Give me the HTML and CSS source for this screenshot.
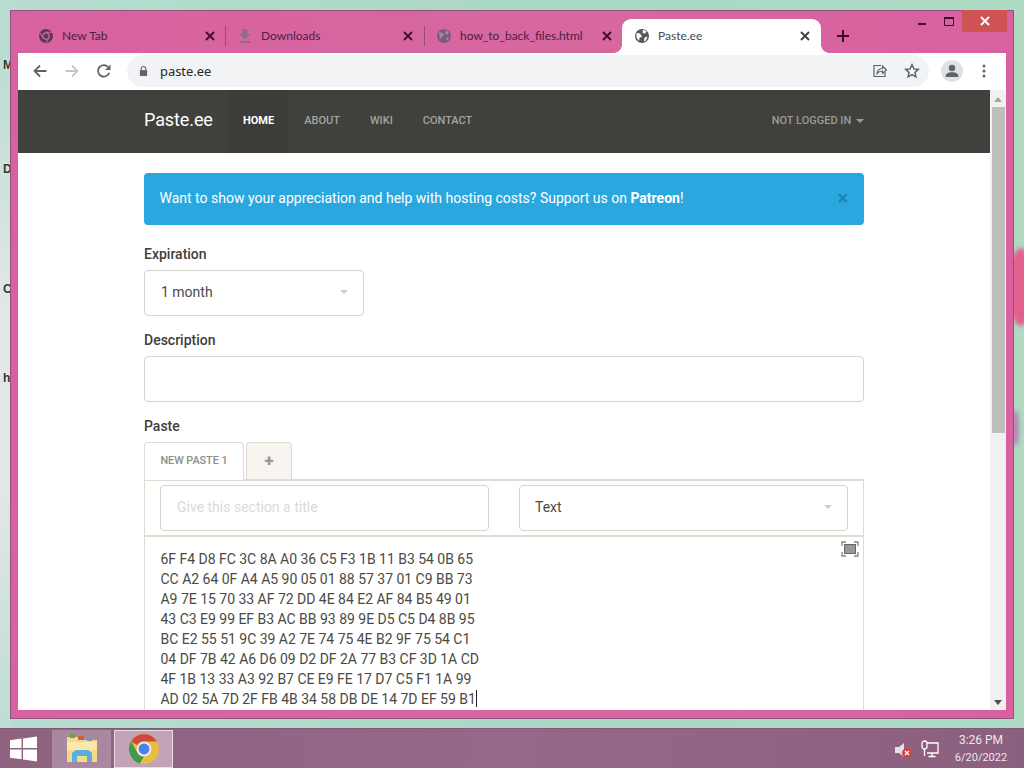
FILE: index.html
```html
<!DOCTYPE html>
<html lang="en">
<head>
<meta charset="utf-8">
<title>Paste.ee</title>
<link rel="stylesheet" href="styles.css">
</head>
<body>
<div class="desktop">
  <span class="peek peek-m">M</span>
  <span class="peek peek-d">D</span>
  <span class="peek peek-c">C</span>
  <span class="peek peek-h">h</span>
  <div class="blob blob-a"></div>
  <div class="blob blob-b"></div>

  <div class="window">
    <div class="winctl">
      <span class="wc wc-min"><svg width="10" height="10" viewBox="0 0 10 10"><rect x="1" y="7" width="8" height="2" fill="#4a1030"/></svg></span>
      <span class="wc wc-max"><svg width="12" height="11" viewBox="0 0 12 11"><path d="M1.500 1.500h9v8h-9z" fill="none" stroke="#3d0f2a" stroke-width="1"/><rect x="1" y="1" width="10" height="2" fill="#3d0f2a"/></svg></span>
      <span class="wc wc-close"><svg width="10" height="10" viewBox="0 0 10 10"><path d="M1 1l8 8M9 1l-8 8" stroke="#fff" stroke-width="1.800"/></svg></span>
    </div>
    <div class="tabstrip">
      <div class="tab tab-first">
        <svg class="favicon" viewBox="0 0 16 16"><circle cx="8" cy="8" r="7" fill="#5a3a55"/><circle cx="8" cy="8" r="3.800" fill="#d8679f"/><circle cx="8" cy="8" r="2.600" fill="#5a3a55"/><path d="M8 4.200h6M4.800 10l-2.800-5M10.800 10l-3 5" stroke="#d8679f" stroke-width="1"/></svg>
        <span class="tab-title">New Tab</span>
        <svg class="tab-x" viewBox="0 0 10 10"><path d="M1 1l8 8M9 1l-8 8" stroke="#3f0d2b" stroke-width="1.800"/></svg>
      </div>
      <div class="tab-sep"></div>
      <div class="tab">
        <svg class="favicon" viewBox="0 0 16 16"><path d="M5.500 1h5v5h3L8 11.500 2.500 6h3z M2.500 13h11v2h-11z" fill="#8f6a8a"/></svg>
        <span class="tab-title">Downloads</span>
        <svg class="tab-x" viewBox="0 0 10 10"><path d="M1 1l8 8M9 1l-8 8" stroke="#3f0d2b" stroke-width="1.800"/></svg>
      </div>
      <div class="tab-sep"></div>
      <div class="tab tab-third">
        <svg class="favicon" viewBox="0 0 16 16"><circle cx="8" cy="8" r="7" fill="#7b5a80"/><path d="M3 4l4 1 1 3-3 1-1 3zM10 2l3 3-2 2-2-2zM10 10l3-1-2 4z" fill="#a985a5"/></svg>
        <span class="tab-title">how_to_back_files.html</span>
        <svg class="tab-x" viewBox="0 0 10 10"><path d="M1 1l8 8M9 1l-8 8" stroke="#3f0d2b" stroke-width="1.800"/></svg>
      </div>
      <div class="tab tab-active">
        <svg class="favicon" viewBox="0 0 16 16"><circle cx="8" cy="8" r="7" fill="#55585c"/><path d="M2.500 5l3.500.5 2 3-2.500 1.500-.5 3-2.500-3.500zM9 1.800l3.500 1.500-1.500 2.500-2.500-1zM10.500 9.500l3-1-1.500 4-2 1z" fill="#fff"/></svg>
        <span class="tab-title">Paste.ee</span>
        <svg class="tab-x" viewBox="0 0 10 10"><path d="M1 1l8 8M9 1l-8 8" stroke="#3c4043" stroke-width="1.800"/></svg>
      </div>
      <svg class="newtab" viewBox="0 0 14 14"><path d="M7 1v12M1 7h12" stroke="#3a0c28" stroke-width="2"/></svg>
    </div>

    <div class="toolbar">
      <svg class="tb-icon" viewBox="0 0 16 16"><path d="M14.500 8H2.500M8 2.500L2.500 8 8 13.500" fill="none" stroke="#5f6368" stroke-width="1.800"/></svg>
      <svg class="tb-icon" viewBox="0 0 16 16"><path d="M1.500 8h12M8 2.500L13.500 8 8 13.500" fill="none" stroke="#c4c7c9" stroke-width="1.800"/></svg>
      <svg class="tb-icon" viewBox="0 0 16 16"><path d="M13.300 9.800A5.800 5.800 0 1 1 12.200 4" fill="none" stroke="#5f6368" stroke-width="1.800"/><path d="M14.500 1.500v5.500H9z" fill="#5f6368"/></svg>
      <div class="omnibox">
        <svg class="lock" viewBox="0 0 10 12"><path d="M2.500 5V3.500a2.500 2.500 0 0 1 5 0V5" fill="none" stroke="#5f6368" stroke-width="1.200"/><rect x="1" y="5" width="8" height="6.500" fill="#5f6368"/></svg>
        <span class="url">paste.ee</span>
        <span class="omni-spacer"></span>
        <svg class="omni-icon" viewBox="0 0 16 16"><path d="M9 2.500H2v11h11V9" fill="none" stroke="#5f6368" stroke-width="1.200"/><path d="M5 10.500c.5-3 2.500-5 5.500-5V3l4 4-4 3.500V8c-2.500 0-4 .8-5.500 2.500z" fill="#f1f3f4" stroke="#5f6368" stroke-width="1.200"/></svg>
        <svg class="omni-icon" viewBox="0 0 16 16"><path d="M8 1.800l1.900 4.100 4.400.5-3.300 3 .9 4.400L8 11.600l-3.900 2.200.9-4.400-3.300-3 4.400-.5z" fill="none" stroke="#5f6368" stroke-width="1.500"/></svg>
      </div>
      <span class="avatar"><svg width="14" height="14" viewBox="0 0 14 14"><circle cx="7" cy="4" r="3.200" fill="#5f6368"/><path d="M0.500 13c0-3.500 3-4.800 6.500-4.800s6.500 1.300 6.500 4.800z" fill="#5f6368"/></svg></span>
      <svg class="kebab" viewBox="0 0 4 14"><circle cx="2" cy="2" r="1.500" fill="#5f6368"/><circle cx="2" cy="7" r="1.500" fill="#5f6368"/><circle cx="2" cy="12" r="1.500" fill="#5f6368"/></svg>
    </div>

    <div class="viewport">
      <div class="page">
        <nav class="navbar">
          <div class="container nav-inner">
            <a class="brand">Paste.ee</a>
            <a class="navlink navlink-active">HOME</a>
            <a class="navlink">ABOUT</a>
            <a class="navlink">WIKI</a>
            <a class="navlink">CONTACT</a>
            <span class="nav-spacer"></span>
            <a class="navlink navlink-right">NOT LOGGED IN <i class="caret"></i></a>
          </div>
        </nav>
        <main class="container content">
          <div class="alert">
            <span>Want to show your appreciation and help with hosting costs? Support us on <b>Patreon</b>!</span>
            <span class="alert-x">×</span>
          </div>
          <label class="label">Expiration</label>
          <div class="select select-exp">1 month<i class="caret caret-light"></i></div>
          <label class="label">Description</label>
          <div class="input"></div>
          <label class="label">Paste</label>
          <div class="pastetabs">
            <span class="ptab ptab-active">NEW PASTE 1</span>
            <span class="ptab ptab-add">+</span>
          </div>
          <div class="pastebox">
            <div class="pasterow">
              <div class="input input-title">Give this section a title</div>
              <div class="select select-lang">Text<i class="caret caret-light"></i></div>
            </div>
            <div class="editor">
              <svg class="fullscreen" viewBox="0 0 18 16"><path d="M1 5V1h4M13 1h4v4M17 11v4h-4M5 15H1v-4" fill="none" stroke="#888" stroke-width="1.300"/><rect x="3.500" y="3.500" width="11" height="9" fill="#999" stroke="#666" stroke-width="1"/></svg>
              <div>6F F4 D8 FC 3C 8A A0 36 C5 F3 1B 11 B3 54 0B 65</div>
              <div>CC A2 64 0F A4 A5 90 05 01 88 57 37 01 C9 BB 73</div>
              <div>A9 7E 15 70 33 AF 72 DD 4E 84 E2 AF 84 B5 49 01</div>
              <div>43 C3 E9 99 EF B3 AC BB 93 89 9E D5 C5 D4 8B 95</div>
              <div>BC E2 55 51 9C 39 A2 7E 74 75 4E B2 9F 75 54 C1</div>
              <div>04 DF 7B 42 A6 D6 09 D2 DF 2A 77 B3 CF 3D 1A CD</div>
              <div>4F 1B 13 33 A3 92 B7 CE E9 FE 17 D7 C5 F1 1A 99</div>
              <div>AD 02 5A 7D 2F FB 4B 34 58 DB DE 14 7D EF 59 B1<span class="cursor"></span></div>
            </div>
          </div>
        </main>
      </div>
      <div class="scrollbar">
        <i class="arrow arrow-up"></i>
        <div class="thumb"></div>
        <i class="arrow arrow-down"></i>
      </div>
    </div>
  </div>

  <div class="taskbar">
    <svg class="start" viewBox="0 0 28 26"><path d="M0 4l12-1.800V12H0zM13.500 2L28 0v12H13.500zM0 13.500h12v10L0 22zM13.500 13.500H28V26l-14.500-2z" fill="#fff"/></svg>
    <div class="tb-btn">
      <svg width="32" height="31" viewBox="0 0 32 31"><path d="M1 4h11l3 3h16v22H1z" fill="#f3d98a"/><path d="M1 9h30v8H1z" fill="#fbe9a8"/><rect x="4" y="1" width="5" height="4" fill="#6aa04e"/><rect x="12" y="3" width="6" height="4" fill="#c9603e"/><rect x="21" y="5" width="5" height="3" fill="#6f9bc9"/><path d="M6 29v-9l4-3h12l4 3v9h-5v-6H11v6z" fill="#58aede"/></svg>
    </div>
    <div class="tb-btn tb-btn-active">
      <svg width="30" height="30" viewBox="0 0 32 32"><circle cx="16" cy="16" r="16" fill="#e9bd3f"/><path d="M16 0a16 16 0 0 1 13.860 8H16a8 8 0 0 0-6.930 4L2.140 8A16 16 0 0 1 16 0z" fill="#cf4a3e"/><path d="M2.140 8l6.930 12A8 8 0 0 0 16 24l-4.500 7.400A16 16 0 0 1 2.140 8z" fill="#3f9a4c"/><circle cx="16" cy="16" r="8" fill="#efe6ea"/><circle cx="16" cy="16" r="5.800" fill="#4a80e8"/></svg>
    </div>
    <span class="task-spacer"></span>
    <svg class="tray-sound" viewBox="0 0 20 18"><path d="M1 6h4l5-4v14l-5-4H1z" fill="#e8dfe6"/><circle cx="13" cy="12" r="5" fill="#d04545"/><path d="M11 10l4 4M15 10l-4 4" stroke="#fff" stroke-width="1.200"/></svg>
    <svg class="tray-net" viewBox="0 0 18 18"><path d="M6 3h11v10H6M11 13v3M7.500 16.500h7" fill="none" stroke="#fff" stroke-width="1.300"/><rect x="1" y="1" width="5" height="8" rx="2.500" fill="#8a5f80" stroke="#fff" stroke-width="1.300"/><path d="M3.500 9v7" stroke="#fff" stroke-width="1.300"/></svg>
    <div class="clock"><div class="clock-time">3:26 PM</div><div class="clock-date">6/20/2022</div></div>
  </div>
</div>
</body>
</html>
```
FILE: styles.css
```css
* { box-sizing: border-box; }
html, body { margin: 0; padding: 0; }
body { font-family: Roboto, "Liberation Sans", sans-serif; }
.desktop {
  position: relative; width: 1024px; height: 768px; overflow: hidden;
  background:
    linear-gradient(180deg, rgba(226,230,228,0) 40px, #e2e6e4 300px, #e2e6e4 500px, rgba(226,230,228,0) 760px) 0 0 / 10px 100% no-repeat,
    linear-gradient(90deg, #b8dcd0 0%, #abd8c4 50%, #aedbc2 100%);
}
.peek { position: absolute; left: 3px; font-size: 12px; font-weight: 700; color: #333; line-height: 12px; text-shadow: 0 0 2px #fff; font-family: "Liberation Sans", sans-serif; }
.peek-m { top: 59px; }
.peek-d { top: 163px; }
.peek-c { top: 283px; }
.peek-h { top: 372px; }
.blob { position: absolute; filter: blur(2px); }
.blob-a { left: 1008px; top: 248px; width: 26px; height: 78px; border-radius: 50%; background: #e2608f; }
.blob-b { left: 1012px; top: 410px; width: 7px; height: 36px; border-radius: 50%; background: #b57fb4; }

/* window */
.window {
  position: absolute; left: 10px; top: 10px; width: 1004px; height: 709px;
  background: linear-gradient(90deg, #d9619f, #d6689f 55%, #d9619f);
  border: 1px solid #8c5478;
  padding: 0 7px 8px 7px;
  display: flex; flex-direction: column;
}
.winctl { position: absolute; right: 6px; top: -1px; display: flex; height: 22px; }
.wc { display: flex; align-items: center; justify-content: center; }
.wc-min { width: 28px; }
.wc-max { width: 26px; }
.wc-close { width: 45px; background: #cf5354; }

.tabstrip { height: 42px; padding-top: 8px; display: flex; align-items: stretch; flex: none; }
.tab {
  width: 198px; display: flex; align-items: center; padding: 0 11px 0 11px;
  font-family: Lato, Roboto, sans-serif; font-size: 12px; color: #4f2043; flex: none;
}
.tab-first { width: 207px; padding: 0 10px 0 20px; }
.tab-third { width: 197px; padding-right: 10px; }
.tab-sep { width: 1px; height: 20px; margin-top: 7px; background: #9c4a78; flex: none; }
.tab-active {
  position: relative; width: 199px; background: #fff; color: #45484c; border-radius: 9px 9px 0 0;
  padding-left: 12px; height: 34px; padding-right: 11px;
}
.tab-active::before, .tab-active::after {
  content: ""; position: absolute; bottom: 0; width: 8px; height: 8px;
}
.tab-active::before { left: -8px; background: radial-gradient(circle at 0 0, transparent 7.500px, #fff 8px); }
.tab-active::after { right: -8px; background: radial-gradient(circle at 100% 0, transparent 7.500px, #fff 8px); }
.favicon { width: 16px; height: 16px; flex: none; }
.tab-title { flex: 1; padding: 0 0 2px 8px; white-space: nowrap; }
.tab-x { width: 10px; height: 10px; flex: none; }
.newtab { width: 14px; height: 14px; margin: 10px 0 0 15px; flex: none; }

.toolbar {
  height: 37px; background: #fff; flex: none; display: flex; align-items: center;
  padding: 0 20px 2px 14px;
}
.tb-icon { width: 16px; height: 16px; margin-right: 16px; flex: none; }
.omnibox {
  flex: 1; height: 32px; margin-left: -1px; background: #f1f3f4; border-radius: 16px;
  display: flex; align-items: center; padding: 0 9px 0 12px;
}
.lock { width: 9px; height: 12px; flex: none; }
.url { font-family: "Noto Sans", Roboto, sans-serif; font-size: 12.900px; color: #24282b; margin-left: 12px; }
.omni-spacer { flex: 1; }
.omni-icon { width: 16px; height: 16px; margin-left: 16px; flex: none; }
.avatar {
  width: 22px; height: 22px; border-radius: 50%; background: #dfe1e5; margin-left: 12px;
  display: flex; align-items: center; justify-content: center; overflow: hidden; flex: none;
}
.kebab { width: 4px; height: 14px; margin-left: 19px; flex: none; }

.viewport { flex: 1; display: flex; min-height: 0; background: #fff; overflow: hidden; }
.page { flex: 1; min-width: 0; overflow: hidden; }
.container { width: 720px; margin-left: 126px; }

.navbar { height: 63px; background: #40403c; }
.nav-inner { display: flex; align-items: stretch; height: 63px; }
.brand { font-size: 18px; line-height: 59px; color: #fff; width: 84px; flex: none; letter-spacing: -.1px; }
.navlink { font-size: 11px; font-weight: 500; line-height: 61px; color: #a5a5a0; padding: 0 15px; }
.navlink-active { color: #fff; background: #3c3c38; font-weight: 700; padding-right: 14px; margin-right: 1px; }
.nav-spacer { flex: 1; }
.navlink-right { padding-right: 0; color: #9c9c97; }
.caret {
  display: inline-block; width: 0; height: 0; margin-left: 2px; vertical-align: middle;
  border-left: 4px solid transparent; border-right: 4px solid transparent; border-top: 4px solid currentColor;
}

.content { padding-top: 20px; }
.alert {
  height: 52px; background: #2ba7e0; border-radius: 4px; color: #fff; font-size: 14px;
  display: flex; align-items: center; justify-content: space-between; padding: 0 16px 2px 15.500px; margin-bottom: 19px;
}
.alert-x { color: #1b84b5; font-size: 20px; font-weight: 700; line-height: 20px; }
.label { display: block; font-size: 14px; font-weight: 500; color: #40403c; line-height: 20px; margin-bottom: 6px; }
.select, .input {
  border: 1px solid #d6d3cb; border-radius: 4px; height: 46px; background: #fff;
  font-size: 14px; color: #4a4a46;
  display: flex; align-items: center; justify-content: space-between; padding: 0 15px 2px 16px;
}
.select-exp { width: 220px; margin-bottom: 14px; }
.input { margin-bottom: 14px; }
.caret-light { color: #cfcdc8; }
.pastetabs { display: flex; gap: 2px; height: 38px; align-items: flex-start; }
.ptab {
  height: 38px; border: 1px solid #dedbd3; border-bottom: 0; border-radius: 4px 4px 0 0;
  font-size: 10.800px; font-weight: 500; color: #8e8e88; display: flex; align-items: center; justify-content: center; padding-bottom: 2px;
}
.ptab-active { width: 100px; background: #fff; }
.ptab-add { width: 46px; height: 37px; background: #f8f5f0; font-size: 17px; font-weight: 900; color: #9a9a95; }
.pastebox { border: 1px solid #dedbd3; border-top: 2px solid #dedbd3; margin-top: -1px; border-bottom: 0; }
.pasterow { display: flex; justify-content: space-between; padding: 4px 15px; border-bottom: 2px solid #dedbd3; }
.input-title { width: 329px; margin: 0; color: #dcdad4; }
.select-lang { width: 329px; padding-left: 15px; }
.editor {
  position: relative; padding: 11.500px 16px 0 15.500px; font-size: 14px; letter-spacing: -.02px; line-height: 20px; color: #4a4a44; height: 200px;
}
.fullscreen { position: absolute; right: 4px; top: 4px; width: 18px; height: 16px; }
.cursor { display: inline-block; width: 1px; height: 17px; background: #222; vertical-align: -3px; }

.scrollbar { width: 16px; flex: none; background: #f1f1f1; display: flex; flex-direction: column; align-items: center; }
.thumb { width: 13px; height: 326px; background: #bfbebb; margin-top: 5px; }
.arrow { display: block; width: 0; height: 0; border-left: 4px solid transparent; border-right: 4px solid transparent; flex: none; }
.arrow-up { border-bottom: 5px solid #a3a3a3; margin-top: 7px; }
.arrow-down { border-top: 5px solid #505050; margin-top: auto; margin-bottom: 5px; }

/* taskbar */
.taskbar {
  position: absolute; left: 0; right: 0; bottom: 0; height: 40px;
  background: linear-gradient(90deg, #8f627f, #96678a 50%, #8b5f7e);
  border-top: 1px solid #7f5a75;
  display: flex; align-items: center;
}
.start { width: 27px; height: 26px; margin-left: 10px; flex: none; }
.tb-btn {
  width: 59px; height: 38px; margin-left: 15px; border: 1px solid #a98aa2; background: #a9879f;
  display: flex; align-items: center; justify-content: center; flex: none;
}
.tb-btn-active { background: #c0a4b6; border-color: #e8dfe6; margin-left: 3px; }
.task-spacer { flex: 1; }
.tray-sound { width: 20px; height: 18px; margin-top: 2px; flex: none; }
.tray-net { width: 18px; height: 18px; margin-left: 7px; flex: none; }
.clock { width: 76px; margin-left: 4px; margin-right: 5px; line-height: 17px; text-align: center; color: #f0e6ec; flex: none; }
.clock-time { font-size: 12px; }
.clock-date { font-size: 11px; }
```
